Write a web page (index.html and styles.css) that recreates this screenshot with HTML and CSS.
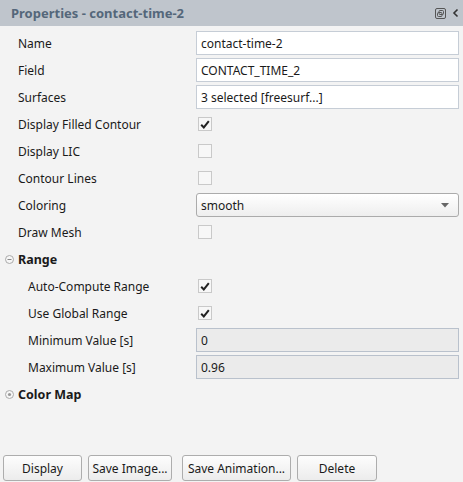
FILE: index.html
```html
<!DOCTYPE html>
<html>
<head>
<meta charset="utf-8">
<link rel="stylesheet" href="styles.css">
</head>
<body>
<div class="panel">
  <div class="titlebar">
    <span class="title">Properties - contact-time-2</span>
    <span class="ticons">
      <svg class="float-ic" width="11" height="11" viewBox="0 0 11 11"><rect x="0.5" y="0.5" width="10" height="10" rx="1.5" fill="none" stroke="#555" stroke-width="1"/><rect x="4" y="2.5" width="4.5" height="4" rx="1" fill="none" stroke="#555" stroke-width="1"/><rect x="2.5" y="4.5" width="4.5" height="4" rx="1" fill="none" stroke="#555" stroke-width="1"/></svg>
      <svg class="chev" width="7" height="10" viewBox="0 0 7 10"><path d="M5.5 1.5 L2 5 L5.5 8.5" fill="none" stroke="#333" stroke-width="1.6"/></svg>
    </span>
  </div>
  <div class="content">
    <div class="row"><span class="label">Name</span><div class="field text">contact-time-2</div></div>
    <div class="row"><span class="label">Field</span><div class="field text">CONTACT_TIME_2</div></div>
    <div class="row"><span class="label">Surfaces</span><div class="field text">3 selected [freesurf...]</div></div>
    <div class="row"><span class="label">Display Filled Contour</span><div class="field"><span class="cb checked"><svg width="10" height="9" viewBox="0 0 10 9"><path d="M1.2 4.8 L3.8 7.4 L8.8 1.2" fill="none" stroke="#222" stroke-width="2"/></svg></span></div></div>
    <div class="row"><span class="label">Display LIC</span><div class="field"><span class="cb"></span></div></div>
    <div class="row"><span class="label">Contour Lines</span><div class="field"><span class="cb"></span></div></div>
    <div class="row"><span class="label">Coloring</span><div class="field combo"><span>smooth</span><svg class="arrow" width="8" height="5" viewBox="0 0 8 5"><path d="M0 0 H8 L4 4.5 Z" fill="#666"/></svg></div></div>
    <div class="row"><span class="label">Draw Mesh</span><div class="field"><span class="cb"></span></div></div>
    <div class="row section"><svg class="toggle" width="9" height="9" viewBox="0 0 9 9"><circle cx="4.5" cy="4.5" r="4" fill="#f6f6f6" stroke="#aaa" stroke-width="1"/><path d="M2.5 4.5 H6.5" stroke="#888" stroke-width="1"/></svg><span class="label">Range</span></div>
    <div class="row"><span class="label sub">Auto-Compute Range</span><div class="field"><span class="cb checked"><svg width="10" height="9" viewBox="0 0 10 9"><path d="M1.2 4.8 L3.8 7.4 L8.8 1.2" fill="none" stroke="#222" stroke-width="2"/></svg></span></div></div>
    <div class="row"><span class="label sub">Use Global Range</span><div class="field"><span class="cb checked"><svg width="10" height="9" viewBox="0 0 10 9"><path d="M1.2 4.8 L3.8 7.4 L8.8 1.2" fill="none" stroke="#222" stroke-width="2"/></svg></span></div></div>
    <div class="row"><span class="label sub">Minimum Value [s]</span><div class="field text ro">0</div></div>
    <div class="row"><span class="label sub">Maximum Value [s]</span><div class="field text ro">0.96</div></div>
    <div class="row section"><svg class="toggle" width="9" height="9" viewBox="0 0 9 9"><circle cx="4.5" cy="4.5" r="4" fill="#f6f6f6" stroke="#aaa" stroke-width="1"/><circle cx="4.5" cy="4.5" r="1.6" fill="#999"/></svg><span class="label">Color Map</span></div>
  </div>
  <div class="footer">
    <button class="btn b1">Display</button>
    <button class="btn b2">Save Image...</button>
    <button class="btn b3">Save Animation...</button>
    <button class="btn b4">Delete</button>
  </div>
</div>
</body>
</html>
```

FILE: styles.css
```css
html, body {
  margin: 0;
  padding: 0;
}
body {
  width: 463px;
  height: 482px;
  overflow: hidden;
  background: #f3f3f3;
  font-family: "Noto Sans", "DejaVu Sans", sans-serif;
  font-size: 12px;
  color: #1a1a1a;
}
.panel {
  display: flex;
  flex-direction: column;
  height: 482px;
}
.titlebar {
  height: 26px;
  background: #bfc5cc;
  display: flex;
  align-items: center;
  justify-content: space-between;
  padding: 0 4px 0 11px;
  flex: none;
}
.title {
  font-weight: bold;
  font-size: 13px;
  color: #54677a;
}
.ticons {
  display: flex;
  align-items: center;
  gap: 6px;
}
.content {
  flex: 1;
  padding-top: 5px;
  display: flex;
  flex-direction: column;
  gap: 3px;
}
.row {
  display: grid;
  grid-template-columns: 196px 263px;
  height: 24px;
  align-items: center;
}
.row.section {
  display: flex;
  align-items: center;
}
.label {
  padding-left: 18px;
  white-space: nowrap;
}
.label.sub {
  padding-left: 28px;
}
.section .toggle {
  margin-left: 5px;
}
.section .label {
  padding-left: 4px;
  font-weight: bold;
  font-size: 12.5px;
}
.field {
  height: 24px;
  box-sizing: border-box;
  display: flex;
  align-items: center;
}
.field.text {
  background: #ffffff;
  border: 1px solid #c6cdd6;
  padding-left: 4px;
}
.field.text.ro {
  background: #ebebeb;
  border-color: #b9c1cc;
}
.field.combo {
  border: 1px solid #ababab;
  border-radius: 3px;
  background: linear-gradient(#ffffff, #eeeeee);
  padding: 0 9px 0 4px;
  justify-content: space-between;
}
.cb {
  width: 14px;
  height: 14px;
  box-sizing: border-box;
  border: 1px solid #c9c9c9;
  background: #f7f7f7;
  margin-left: 2px;
  display: flex;
  align-items: center;
  justify-content: center;
}
.footer {
  flex: none;
  height: 27px;
  display: flex;
  align-items: flex-start;
  padding-left: 3px;
}
.btn {
  font-family: "Noto Sans", "DejaVu Sans", sans-serif;
  font-size: 12px;
  color: #1a1a1a;
  height: 26px;
  box-sizing: border-box;
  border: 1px solid #adadad;
  border-radius: 3px;
  background: linear-gradient(#fdfdfd, #ececec);
  padding: 0;
}
.b1 { width: 79px; }
.b2 { width: 84px; margin-left: 6px; }
.b3 { width: 109px; margin-left: 10px; }
.b4 { width: 80px; margin-left: 6px; }
```
